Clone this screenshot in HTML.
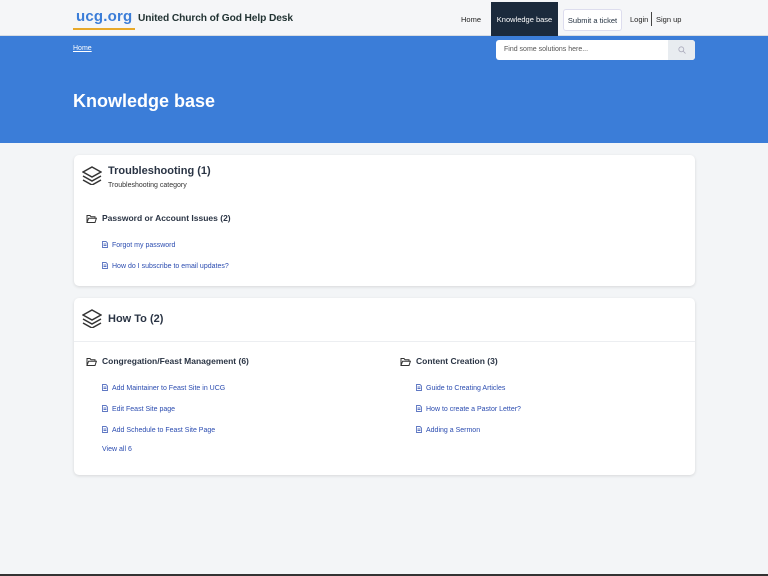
<!DOCTYPE html>
<html><head><meta charset="utf-8"><style>
*{box-sizing:border-box;margin:0;padding:0}
body{width:768px;height:576px;background:#f3f5f7;font-family:"Liberation Sans",sans-serif;position:relative;overflow:hidden;color:#1f2d3d}
.hdr{position:absolute;left:0;top:0;width:768px;height:36px;background:#f5f6f8;border-bottom:1px solid #d8dde3}
.logo{position:absolute;left:76px;top:8px;font-size:15px;font-weight:bold;color:#3b7dd8;letter-spacing:.2px}
.logo:after{content:"";position:absolute;left:-3px;top:20px;width:62px;height:2px;background:#e8a92a}
.title{position:absolute;left:138px;top:13px;font-size:10.2px;font-weight:bold;color:#233;letter-spacing:-.1px}
.nav{position:absolute;top:0;font-size:7.5px;color:#222}
.band{position:absolute;left:0;top:36px;width:768px;height:107px;background:#3b7dd8}
.bc{position:absolute;left:73px;top:45px;font-size:7px;color:#fff;text-decoration:underline}
.h1{position:absolute;left:73px;top:91px;font-size:18px;font-weight:bold;color:#fff}
.search{position:absolute;left:496px;top:40px;width:199px;height:20px;background:#fff;border-radius:3px;overflow:hidden;font-size:7px;color:#555}
.card{position:absolute;left:74px;width:621px;background:#fff;border-radius:5px;box-shadow:0 1px 3px rgba(0,0,0,.12)}
.ct{position:absolute;left:34px;font-size:11px;font-weight:bold;color:#2a3444}
.sub{font-size:8.5px;font-weight:bold;color:#2a3444;position:absolute}
.lk{position:absolute;font-size:7px;color:#2b4cb0}
.ico{position:absolute}
</style></head><body>
<div class="hdr">
<div class="logo">ucg.org</div>
<div class="title">United Church of God Help Desk</div>
<div class="nav" style="left:461px;top:15px">Home</div>
<div style="position:absolute;left:491px;top:2px;width:67px;height:34px;background:#1b2a3c;color:#fff;font-size:7.5px;padding-top:13px;text-align:center">Knowledge base</div>
<div style="position:absolute;left:563px;top:9px;width:59px;height:22px;background:#fff;border:1px solid #dde;border-radius:3px;font-size:7.5px;text-align:center;padding-top:6px">Submit a ticket</div>
<div class="nav" style="left:630px;top:15px">Login</div>
<div style="position:absolute;left:651px;top:12px;width:1px;height:14px;background:#444"></div>
<div class="nav" style="left:656px;top:15px">Sign up</div>
</div>
<div class="band"></div>
<div class="bc">Home</div>
<div class="h1">Knowledge base</div>
<div class="search"><span style="position:absolute;left:8px;top:6px">Find some solutions here...</span>
<div style="position:absolute;right:0;top:0;width:27px;height:20px;background:#e8ecf0"></div>
<svg style="position:absolute;right:9px;top:6px" width="8" height="8" viewBox="0 0 8 8"><circle cx="3.3" cy="3.3" r="2.5" fill="none" stroke="#aab" stroke-width=".8"/><path d="M5.2 5.2L7.5 7.5" stroke="#aab" stroke-width=".8"/></svg></div>

<div class="card" style="top:155px;height:131px">
<svg class="ico" style="left:8px;top:10px" width="20" height="20" viewBox="0 0 20 20" fill="none" stroke="#333" stroke-width="1.5"><path d="M10 2L19 7 10 12 1 7Z"/><path d="M1 11l9 5 9-5"/><path d="M1 15l9 5 9-5"/></svg>
<div class="ct" style="top:10px">Troubleshooting (1)</div>
<div style="position:absolute;left:34px;top:27px;font-size:7px;color:#333">Troubleshooting category</div>
<svg class="ico" style="left:12px;top:59px" width="11" height="10" viewBox="0 0 11 10" fill="none" stroke="#333"><path d="M1 8.5V1.5h3l1 1.2h4v1.5M1 8.5l1.6-4.3h7.8L9 8.5Z"/></svg>
<div class="sub" style="left:28px;top:58px">Password or Account Issues (2)</div>
<svg class="ico" style="left:28px;top:86px" width="6" height="7" viewBox="0 0 6 7" fill="none" stroke="#2b4cb0" stroke-width=".7"><path d="M.5.5h3.5l1.5 1.5v4.5h-5Z M1.5 3h3M1.5 4.5h3"/></svg>
<div class="lk" style="left:38px;top:87px">Forgot my password</div>
<svg class="ico" style="left:28px;top:107px" width="6" height="7" viewBox="0 0 6 7" fill="none" stroke="#2b4cb0" stroke-width=".7"><path d="M.5.5h3.5l1.5 1.5v4.5h-5Z M1.5 3h3M1.5 4.5h3"/></svg>
<div class="lk" style="left:38px;top:108px">How do I subscribe to email updates?</div>
</div>

<div class="card" style="top:298px;height:177px">
<svg class="ico" style="left:8px;top:10px" width="20" height="20" viewBox="0 0 20 20" fill="none" stroke="#333" stroke-width="1.5"><path d="M10 2L19 7 10 12 1 7Z"/><path d="M1 11l9 5 9-5"/><path d="M1 15l9 5 9-5"/></svg>
<div class="ct" style="top:15px">How To (2)</div>
<div style="position:absolute;left:0;top:43px;width:621px;height:1px;background:#eceef1"></div>
<svg class="ico" style="left:12px;top:59px" width="11" height="10" viewBox="0 0 11 10" fill="none" stroke="#333"><path d="M1 8.5V1.5h3l1 1.2h4v1.5M1 8.5l1.6-4.3h7.8L9 8.5Z"/></svg>
<div class="sub" style="left:28px;top:58px">Congregation/Feast Management (6)</div>
<svg class="ico" style="left:326px;top:59px" width="11" height="10" viewBox="0 0 11 10" fill="none" stroke="#333"><path d="M1 8.5V1.5h3l1 1.2h4v1.5M1 8.5l1.6-4.3h7.8L9 8.5Z"/></svg>
<div class="sub" style="left:342px;top:58px">Content Creation (3)</div>
<svg class="ico" style="left:28px;top:86px" width="6" height="7" viewBox="0 0 6 7" fill="none" stroke="#2b4cb0" stroke-width=".7"><path d="M.5.5h3.5l1.5 1.5v4.5h-5Z M1.5 3h3M1.5 4.5h3"/></svg>
<div class="lk" style="left:38px;top:87px">Add Maintainer to Feast Site in UCG</div>
<svg class="ico" style="left:28px;top:107px" width="6" height="7" viewBox="0 0 6 7" fill="none" stroke="#2b4cb0" stroke-width=".7"><path d="M.5.5h3.5l1.5 1.5v4.5h-5Z M1.5 3h3M1.5 4.5h3"/></svg>
<div class="lk" style="left:38px;top:108px">Edit Feast Site page</div>
<svg class="ico" style="left:28px;top:128px" width="6" height="7" viewBox="0 0 6 7" fill="none" stroke="#2b4cb0" stroke-width=".7"><path d="M.5.5h3.5l1.5 1.5v4.5h-5Z M1.5 3h3M1.5 4.5h3"/></svg>
<div class="lk" style="left:38px;top:129px">Add Schedule to Feast Site Page</div>
<div class="lk" style="left:28px;top:148px">View all 6</div>
<svg class="ico" style="left:342px;top:86px" width="6" height="7" viewBox="0 0 6 7" fill="none" stroke="#2b4cb0" stroke-width=".7"><path d="M.5.5h3.5l1.5 1.5v4.5h-5Z M1.5 3h3M1.5 4.5h3"/></svg>
<div class="lk" style="left:352px;top:87px">Guide to Creating Articles</div>
<svg class="ico" style="left:342px;top:107px" width="6" height="7" viewBox="0 0 6 7" fill="none" stroke="#2b4cb0" stroke-width=".7"><path d="M.5.5h3.5l1.5 1.5v4.5h-5Z M1.5 3h3M1.5 4.5h3"/></svg>
<div class="lk" style="left:352px;top:108px">How to create a Pastor Letter?</div>
<svg class="ico" style="left:342px;top:128px" width="6" height="7" viewBox="0 0 6 7" fill="none" stroke="#2b4cb0" stroke-width=".7"><path d="M.5.5h3.5l1.5 1.5v4.5h-5Z M1.5 3h3M1.5 4.5h3"/></svg>
<div class="lk" style="left:352px;top:129px">Adding a Sermon</div>
</div>
<div style="position:absolute;left:0;top:574px;width:768px;height:2px;background:#333"></div>
</body></html>
